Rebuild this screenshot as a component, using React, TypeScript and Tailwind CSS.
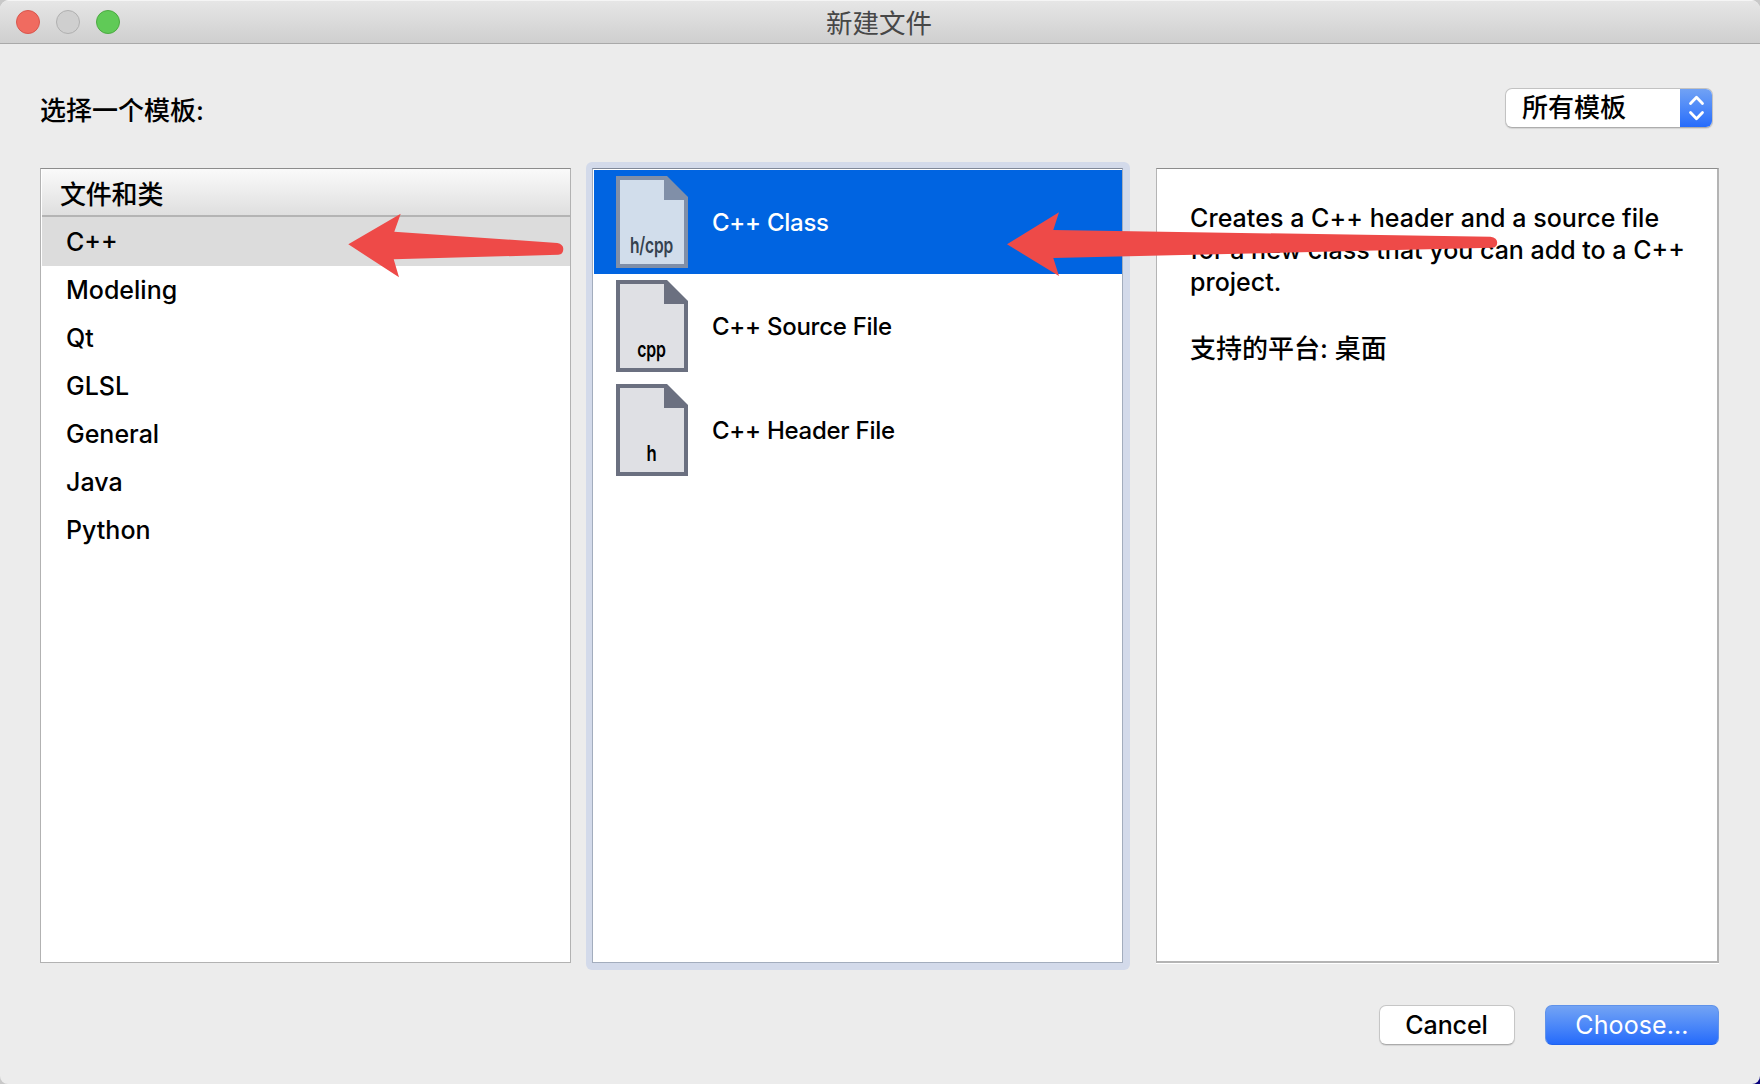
import type { ReactNode } from "react";

const categories = ["C++", "Modeling", "Qt", "GLSL", "General", "Java", "Python"];

const templates = [
  { name: "C++ Class", label: "h/cpp", labelWidth: 43, selected: true },
  { name: "C++ Source File", label: "cpp", labelWidth: 28.5, selected: false },
  { name: "C++ Header File", label: "h", labelWidth: 10, selected: false },
];

function TrafficLight({ className }: { className: string }) {
  return <span className={`size-6 rounded-full border ${className}`} />;
}

function FileIcon({ label, labelWidth, selected }: { label: string; labelWidth: number; selected: boolean }) {
  const edge = selected ? "#808fa8" : "#6b7080";
  const fill = selected ? "#d1ddeb" : "#dfe0e4";
  const ink = selected ? "#35424f" : "#000000";
  return (
    <svg width="72" height="92" viewBox="0 0 72 92" className="shrink-0">
      <path d="M0 0H51L72 21V92H0Z" fill={edge} />
      <path d="M4 4H48V24H68V88H4Z" fill={fill} />
      <text
        x={35.5 - labelWidth / 2}
        y="76.5"
        textLength={labelWidth}
        lengthAdjust="spacingAndGlyphs"
        fill={ink}
        className="font-['Inter',sans-serif] text-[22px] font-semibold"
      >
        {label}
      </text>
    </svg>
  );
}

function CategoryList() {
  return (
    <section className="h-[795px] w-[531px] border border-[#b2b2b2] border-t-[#8c8c8c] bg-white pl-px">
      <h2 className="flex h-[48px] items-center border-b-2 border-[#b4b4b4] bg-linear-to-b from-[#fafafa] to-[#dfdfdf] pt-1 pl-[18px] text-[26px] font-medium tracking-[-0.2px]">
        文件和类
      </h2>
      <ul>
        {categories.map((name, i) => (
          <li
            key={name}
            className={`flex items-center pl-6 ${i === 0 ? "h-[49px] bg-[#dcdcdc] pt-0.5" : "h-12 pt-px"}`}
          >
            {name}
          </li>
        ))}
      </ul>
    </section>
  );
}

function TemplateList() {
  return (
    <section className="h-[795px] w-[531px] border border-[#a3adbd] border-t-[#808898] bg-white pt-px pl-px">
      <ul>
        {templates.map((t) => (
          <li
            key={t.name}
            className={`flex h-[104px] items-center gap-6 pl-[22px] text-[24px] tracking-[-0.27px] ${
              t.selected ? "bg-[#0064e1] text-white" : ""
            }`}
          >
            <FileIcon label={t.label} labelWidth={t.labelWidth} selected={t.selected} />
            <span className="pt-0.5">{t.name}</span>
          </li>
        ))}
      </ul>
    </section>
  );
}

function Description() {
  return (
    <section className="h-[795px] w-[563px] border border-r-2 border-b-2 border-[#b4b4b4] border-t-[#8c8c8c] bg-white px-[33px] pt-[33px] leading-8 shadow-[0_1px_0_#ffffff]">
      <p className="whitespace-nowrap">
        <span className="tracking-[0.05px]">Creates a C++ header and a source file</span>
        <br />
        for a new class that you can add to a C++
        <br />
        project.
      </p>
      <p className="mt-[35px] text-[26px]">支持的平台: 桌面</p>
    </section>
  );
}

function Button({ primary, children }: { primary?: boolean; children: ReactNode }) {
  return (
    <button
      className={`flex h-10 items-center justify-center rounded-[7px] border pt-px ${
        primary
          ? "w-[174px] border-[#5f92ea] border-b-[#1f62ee] bg-linear-to-b from-[#73a3f4] to-[#246afb] font-normal tracking-[0.1px] text-white"
          : "w-[136px] border-[#c6c6c6] border-b-[#ababab] bg-white pr-px tracking-[-0.1px] shadow-[0_1px_1px_rgba(0,0,0,0.1)]"
      }`}
    >
      {children}
    </button>
  );
}

function Arrows() {
  return (
    <svg width="1760" height="1084" viewBox="0 0 1760 1084" fill="#ee4a48" className="pointer-events-none absolute inset-0">
      <path d="M348.3 244.3L400.7 213.7L394.3 231.7L557.3 243Q563.3 244.3 563.3 249Q563.3 254.5 558.3 254.8L393.7 259.3L399 277.3Z" />
      <path d="M1007 244.3L1059 212.3L1053.3 230L1490.5 236.8Q1497.2 238 1497.2 242.5Q1497.2 247.6 1492 247.8L1053.3 258L1059 276Z" />
    </svg>
  );
}

export default function App() {
  return (
    <div className="h-[1084px] w-[1760px] overflow-hidden bg-[linear-gradient(135deg,#c8c8c8_90%,#07007c_90%)]">
      <main className="relative flex h-full flex-col overflow-hidden rounded-t-[9px] rounded-b-[8px] bg-[#ececec] font-['Inter','Noto_Sans_CJK_SC',sans-serif] text-[25px] font-medium text-black">
        <header className="grid h-11 shrink-0 grid-cols-3 items-center border-t border-b border-t-[#f5f5f5] border-b-[#a9a9a9] bg-linear-to-b from-[#e6e6e6] to-[#cfcfcf]">
          <div className="flex gap-4 pl-4">
            <TrafficLight className="border-[#d9564d] bg-[#f06b60]" />
            <TrafficLight className="border-[#b0b0b0] bg-[#cfcfcf]" />
            <TrafficLight className="border-[#4caa42] bg-[#60ca57]" />
          </div>
          <h1 className="pt-0.5 pr-0.5 text-center text-[26.5px] leading-10 font-normal text-[#474747]">新建文件</h1>
        </header>

        <div className="flex h-[124px] shrink-0 items-start justify-between pt-11 pr-[47px] pl-10">
          <p className="mt-[3px] text-[26px] leading-10">选择一个模板:</p>
          <div className="flex h-10 w-52 overflow-hidden rounded-[7px] border border-[#c2c2c2] border-b-[#adadad] bg-white shadow-[0_1px_1px_rgba(0,0,0,0.1)]">
            <span className="flex-1 pl-4 text-[26px] leading-[37px]">所有模板</span>
            <span className="-my-px -mr-px w-[33px] bg-linear-to-b from-[#73a3f4] to-[#246afb]">
              <svg width="33" height="40" viewBox="0 0 33 40" fill="none" stroke="#fff" strokeWidth="2.8" strokeLinecap="round" strokeLinejoin="round">
                <path d="M10.5 15.5L16.5 9.2L22.5 15.5M10.5 24.5L16.5 30.8L22.5 24.5" />
              </svg>
            </span>
          </div>
        </div>

        <div className="flex shrink-0 items-start pl-10">
          <CategoryList />
          <div className="-mt-1.5 mr-[26px] -mb-[7px] ml-[15px] rounded-[6px] bg-[#d3daea] pt-1.5 pr-[7px] pb-[7px] pl-1.5">
            <TemplateList />
          </div>
          <Description />
        </div>

        <footer className="flex justify-end gap-[30px] pt-[42px] pr-[41px]">
          <Button>Cancel</Button>
          <Button primary>Choose...</Button>
        </footer>
        <Arrows />
      </main>
    </div>
  );
}
